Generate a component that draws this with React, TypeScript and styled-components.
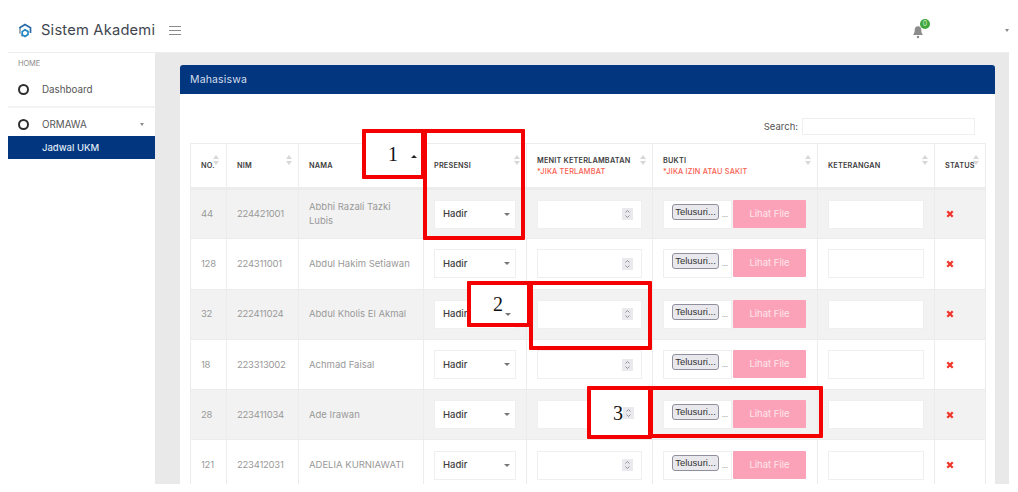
import React from "react";
import styled, { createGlobalStyle } from "styled-components";

const Global = createGlobalStyle`
  html, body { margin: 0; padding: 0; background: #fff; overflow: hidden; }
  body { padding: 8px; height: 492px; font-family: Inter, "Open Sans", sans-serif; }
  * { box-sizing: border-box; }
`;
const Frame = styled.div`
  position: relative; width: 1001px; height: 476px; overflow: hidden; background: #fff;
`;
const Topbar = styled.header`
  height: 45px; display: flex; align-items: center; background: #fff; border-bottom: 1px solid #eee;
`;
const Brand = styled.div`
  width: 148px; padding-left: 10px; display: flex; align-items: center; gap: 9px; overflow: hidden; white-space: nowrap; flex: none;
  font-size: 14.7px; color: #3f4650; letter-spacing: .2px;
`;
const Burger = styled.span`
  width: 12px; margin-left: 13px; height: 9px; border-top: 1px solid #8b8b8b; border-bottom: 1px solid #8b8b8b; position: relative;
  &::after { content: ""; position: absolute; left: 0; right: 0; top: 3px; border-top: 1px solid #8b8b8b; }
`;
const TopRight = styled.div`
  margin-left: auto; display: flex; align-items: center;
`;
const BellWrap = styled.span`
  position: relative; width: 16px; height: 18px; margin-right: 77px; margin-top: 7px; display: block;
`;
const Badge = styled.span`
  position: absolute; top: -5.5px; left: 8px; width: 10px; height: 10px; border-radius: 50%; background: #3fa73c; color: #d8f0d6;
  font-size: 7px; line-height: 10px; text-align: center;
`;
const SmallCaret = styled.span`
  width: 0; height: 0; border-left: 2.5px solid transparent; border-right: 2.5px solid transparent; border-top: 3px solid #8a8a8a; display: block;
`;
const Body = styled.div`
  display: flex; height: 431px;
`;
const Sidebar = styled.aside`
  width: 147px; flex: none; background: #fff; padding-top: 6px;
`;
const SideLabel = styled.div`
  font-size: 7.5px; color: #8d8d8d; padding-left: 10px; line-height: 10px; letter-spacing: -.1px; margin-bottom: 8px;
`;
const SideItem = styled.div`
  display: flex; align-items: center; height: 24px; padding: 0 10px; font-size: 9.8px; color: #555;
`;
const Ring = styled.span`
  width: 11px; height: 11px; border-radius: 50%; border: 2px solid #2e2e2e; margin-right: 13px; flex: none;
`;
const SideRule = styled.hr`
  border: 0; border-top: 2px solid #f3f3f3; margin: 5px 0 4px;
`;
const SideCaretBox = styled.span`
  margin-left: auto; margin-right: 1px;
`;
const SideActive = styled.div`
  height: 23px; background: #02367f; color: #dfe8f4; font-size: 9.5px; font-weight: 500; line-height: 23px; padding-left: 34px;
`;
const Main = styled.main`
  flex: 1; background: #e9e9e9; padding: 12px 14px 0 25px; min-width: 0;
`;
const Card = styled.section`
  background: #fff; height: 100%; border-radius: 3px 3px 0 0; overflow: hidden;
`;
const CardHead = styled.div`
  height: 29px; background: #02367f; color: #d5deec; font-size: 10.5px; line-height: 29px; padding-left: 10px; letter-spacing: .15px;
`;
const CardBody = styled.div`
  padding: 24px 10px 0;
`;
const SearchRow = styled.div`
  display: flex; justify-content: flex-end; align-items: center; gap: 4px; height: 17px; padding-right: 10px; margin-bottom: 8px;
  font-size: 9.5px; color: #555;
`;
const SearchBox = styled.span`
  width: 173px; height: 17px; border: 1px solid #efefef; background: #fff; display: block;
`;
const Table = styled.table`
  width: 795px; border-collapse: collapse; table-layout: fixed; font-size: 9.5px; color: #999;
`;
const Th = styled.th`
  position: relative; height: 45px; border: 1px solid #ececec; border-bottom: 3px solid #ececec; padding: 0 10px; text-align: left; vertical-align: middle;
  font-size: 7.3px; font-weight: 600; color: #3d3d3d; letter-spacing: .2px; line-height: 11px; white-space: nowrap; background: #fff;
`;
const Note = styled.div`
  color: #f8604f; font-weight: 500;
`;
const Sort = styled.span<{ $r: number }>`
  position: absolute; top: 11px; right: ${(p) => p.$r}px; width: 6px; height: 10px; display: flex; flex-direction: column; justify-content: space-between;
  &::before { content: ""; border-left: 3px solid transparent; border-right: 3px solid transparent; border-bottom: 4px solid #d8d8d8; }
  &::after { content: ""; border-left: 3px solid transparent; border-right: 3px solid transparent; border-top: 4px solid #d8d8d8; }
`;
const Tr = styled.tr<{ $odd: boolean }>`
  background: ${(p) => (p.$odd ? "#f2f2f2" : "#fff")};
`;
const Td = styled.td`
  height: 50.3px; border: 1px solid #ececec; padding: 0 10px; line-height: 14px; vertical-align: middle; overflow: hidden;
`;
const NumTd = styled(Td)`
  letter-spacing: -.25px;
`;
const Field = styled.div<{ $w: number }>`
  position: relative; width: ${(p) => p.$w}px; height: 29px; background: #fff; border: 1px solid #efefef; display: flex; align-items: center; justify-content: space-between; padding: 0 5px 0 8px;
  font-size: 9.5px; color: #3d3d3d; font-weight: 500;
`;
const SelectCaret = styled.span`
  width: 0; height: 0; border-left: 3px solid transparent; border-right: 3px solid transparent; border-top: 3.5px solid #777;
`;
const Spinner = styled.span`
  width: 11px; height: 12px; background: #e9e9ee; flex: none; display: block;
`;
const NumberField = styled(Field)`
  justify-content: flex-end; padding-right: 8px;
`;
const FileRow = styled.div`
  display: flex; gap: 1px; width: 143px;
`;
const FileBox = styled.div`
  width: 69px; height: 29px; background: #fff; border: 1px solid #efefef; padding: 3px 0 0 8px; display: flex; gap: 3px; flex: none;
  font-family: "Liberation Sans", sans-serif; font-size: 9.5px; color: #333;
`;
const FileBtn = styled.span`
  width: 47px; height: 16px; background: #e9e9ed; border: 1px solid #8f8f9d; border-radius: 3px; line-height: 14px; text-align: center; flex: none; overflow: hidden;
`;
const Dots = styled.span`
  line-height: 22px; font-size: 7px; color: #555;
`;
const Pink = styled.div`
  width: 73px; height: 28px; background: #fca2b8; color: #fde7ec; font-size: 9.5px; line-height: 28px; text-align: center; border-radius: 1px;
`;
const Cross = styled.svg`
  width: 8px; height: 8px; display: block; margin-left: 1px;
`;
const Marker = styled.div<{ $x: number; $y: number; $w: number; $h: number; $fill?: boolean; $gap?: number }>`
  position: absolute; left: ${(p) => p.$x - 8}px; top: ${(p) => p.$y - 8}px; width: ${(p) => p.$w}px; height: ${(p) => p.$h}px;
  border: 4px solid #f50000; border-radius: 1px; background: ${(p) => (p.$fill ? "#fff" : "transparent")};
  display: flex; align-items: center; gap: ${(p) => p.$gap ?? 0}px; padding-left: 22px;
  font-family: "Liberation Serif", serif; font-size: 20px; color: #111; line-height: 20px;
`;
const CaretUp = styled.span`
  width: 0; height: 0; border-left: 3px solid transparent; border-right: 3px solid transparent; border-bottom: 3.5px solid #222; margin-top: 4px;
`;
const CaretDown = styled.span`
  width: 0; height: 0; border-left: 3px solid transparent; border-right: 3px solid transparent; border-top: 3.5px solid #777; margin-top: 20px;
`;

const rows = [
  ["44", "224421001", "Abbhi Razali Tazki Lubis"],
  ["128", "224311001", "Abdul Hakim Setiawan"],
  ["32", "222411024", "Abdul Kholis El Akmal"],
  ["18", "223313002", "Achmad Faisal"],
  ["28", "223411034", "Ade Irawan"],
  ["121", "223412031", "ADELIA KURNIAWATI"],
];
const widths = [36, 72, 125, 103, 126, 165, 117, 51];

const Logo = () => (
  <svg width="14" height="15" viewBox="0 0 14 15" fill="none" style={{ flex: "none" }}>
    <path d="M2 10.800V4.600" stroke="#8fa0ad" strokeWidth="1.700" />
    <path d="M1.300 5 7 1.500 12.500 4.800V10" stroke="#2b6ca8" strokeWidth="1.700" />
    <path d="M5 13.300 3 12" stroke="#8fa0ad" strokeWidth="1.700" />
    <path d="M7 6.800l3 1.800v3L7 13.400l-2.800-1.800v-3z" stroke="#1f86c6" strokeWidth="1.700" />
  </svg>
);
const Bell = () => (
  <svg width="12" height="14" viewBox="0 0 14 17" style={{ display: "block" }}>
    <path d="M7 1.500c3 0 4 2.400 4 5 0 3 1 4.400 2 5.500H1c1-1.100 2-2.500 2-5.500 0-2.600 1-5 4-5z" fill="#8c8c8c" />
    <circle cx="7" cy="14.500" r="1.500" fill="#8c8c8c" />
  </svg>
);
const Chevrons = () => (
  <svg width="11" height="12" viewBox="0 0 11 12" fill="none" stroke="#888" strokeWidth="0.9" style={{ display: "block" }}>
    <path d="M3.500 4.500 5.500 2.500 7.500 4.500M3.500 7.500 5.500 9.500 7.500 7.500" />
  </svg>
);

export default function App() {
  return (
    <>
      <Global />
      <Frame>
        <Topbar>
          <Brand><Logo />Sistem Akademik</Brand>
          <Burger />
          <TopRight>
            <BellWrap><Bell /><Badge>0</Badge></BellWrap>
            <SmallCaret />
          </TopRight>
        </Topbar>
        <Body>
          <Sidebar>
            <SideLabel>HOME</SideLabel>
            <SideItem><Ring />Dashboard</SideItem>
            <SideRule />
            <SideItem><Ring />ORMAWA<SideCaretBox><SmallCaret /></SideCaretBox></SideItem>
            <SideActive>Jadwal UKM</SideActive>
          </Sidebar>
          <Main>
            <Card>
              <CardHead>Mahasiswa</CardHead>
              <CardBody>
                <SearchRow>Search:<SearchBox /></SearchRow>
                <Table>
                  <colgroup>{widths.map((w, i) => <col key={i} style={{ width: w }} />)}</colgroup>
                  <thead>
                    <tr>
                      <Th>NO.<Sort $r={7} /></Th>
                      <Th>NIM<Sort $r={6} /></Th>
                      <Th>NAMA</Th>
                      <Th>PRESENSI<Sort $r={6} /></Th>
                      <Th>MENIT KETERLAMBATAN<Note>*JIKA TERLAMBAT</Note><Sort $r={6} /></Th>
                      <Th>BUKTI<Note>*JIKA IZIN ATAU SAKIT</Note><Sort $r={6} /></Th>
                      <Th>KETERANGAN<Sort $r={6} /></Th>
                      <Th>STATUS<Sort $r={6} /></Th>
                    </tr>
                  </thead>
                  <tbody>
                    {rows.map((r, i) => (
                      <Tr key={r[0]} $odd={i % 2 === 0}>
                        <NumTd>{r[0]}</NumTd>
                        <NumTd>{r[1]}</NumTd>
                        <Td>{r[2]}</Td>
                        <Td><Field $w={82}>Hadir<SelectCaret /></Field></Td>
                        <Td><NumberField $w={105}><Spinner><Chevrons /></Spinner></NumberField></Td>
                        <Td>
                          <FileRow>
                            <FileBox><FileBtn>Telusuri...</FileBtn><Dots>...</Dots></FileBox>
                            <Pink>Lihat File</Pink>
                          </FileRow>
                        </Td>
                        <Td><Field $w={96} /></Td>
                        <Td>
                          <Cross viewBox="0 0 8 8"><path d="M1.300 1.300 6.700 6.700M6.700 1.300 1.300 6.700" stroke="#f0352a" strokeWidth="2.300" /></Cross>
                        </Td>
                      </Tr>
                    ))}
                  </tbody>
                </Table>
              </CardBody>
            </Card>
          </Main>
        </Body>
        <Marker $x={362} $y={129} $w={63} $h={50} $gap={13} $fill>1<CaretUp /></Marker>
        <Marker $x={423} $y={129} $w={102} $h={111} />
        <Marker $x={467} $y={281} $w={64} $h={46} $gap={2} $fill>2<CaretDown /></Marker>
        <Marker $x={529} $y={281} $w={123} $h={69} />
        <Marker $x={587} $y={386} $w={65} $h={53} $fill>3<Spinner><Chevrons /></Spinner></Marker>
        <Marker $x={649} $y={386} $w={174} $h={52} />
      </Frame>
    </>
  );
}
